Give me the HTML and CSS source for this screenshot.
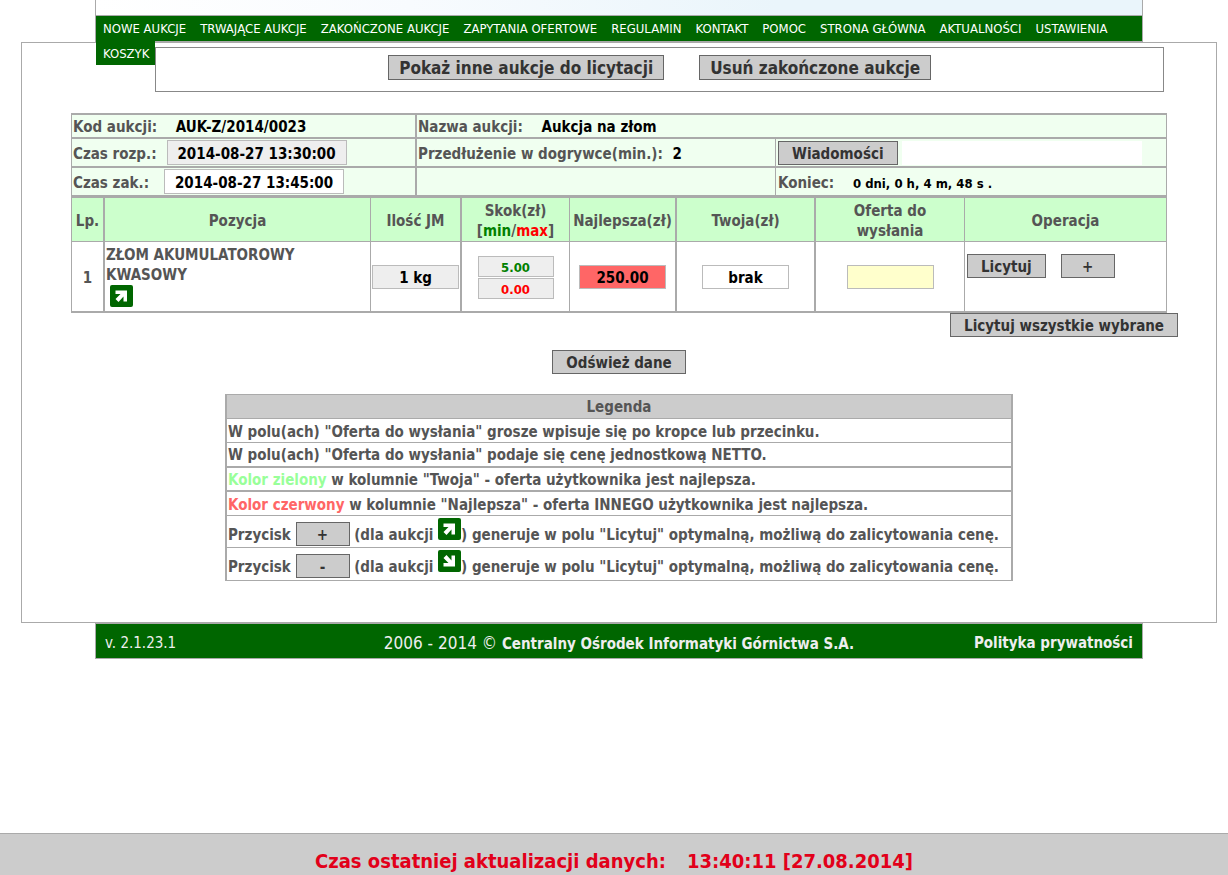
FILE: index.html
```
<!DOCTYPE html>
<html lang="pl">
<head>
<meta charset="utf-8">
<title>Aukcja AUK-Z/2014/0023</title>
<link rel="stylesheet" href="styles.css">
</head>
<body>
<svg class="defs" width="0" height="0" aria-hidden="true">
  <symbol id="arrow-up" viewBox="0 0 23 22">
    <rect width="23" height="22" rx="2" fill="#060"/>
    <path d="M5.500 5.500H17v11h-3.500V11.500L8.500 17 5.500 14 10.500 9H5.500z" fill="#fff"/>
  </symbol>
  <symbol id="arrow-down" viewBox="0 0 23 22">
    <rect width="23" height="22" rx="2" fill="#060"/>
    <path d="M5.500 16.500H17v-11h-3.500V10.500L8.500 5 5.500 8 10.500 13H5.500z" fill="#fff"/>
  </symbol>
</svg>

<header class="header">
  <div class="banner"></div>
  <nav class="nav">
    <a href="#">NOWE AUKCJE</a>
    <a href="#">TRWAJĄCE AUKCJE</a>
    <a href="#">ZAKOŃCZONE AUKCJE</a>
    <a href="#">ZAPYTANIA OFERTOWE</a>
    <a href="#">REGULAMIN</a>
    <a href="#">KONTAKT</a>
    <a href="#">POMOC</a>
    <a href="#">STRONA GŁÓWNA</a>
    <a href="#">AKTUALNOŚCI</a>
    <a href="#">USTAWIENIA</a>
  </nav>
</header>

<main class="main">
  <div class="top-row">
    <a class="cart" href="#">KOSZYK</a>
    <div class="toolbar">
      <button class="btn btn-big" type="button">Pokaż inne aukcje do licytacji</button>
      <button class="btn btn-big" type="button">Usuń zakończone aukcje</button>
    </div>
  </div>

  <table class="info">
    <colgroup><col class="c-code"><col class="c-name"><col></colgroup>
    <tr class="r-first">
      <td class="thick">Kod aukcji: <strong class="value">AUK-Z/2014/0023</strong></td>
      <td colspan="2">Nazwa aukcji: <strong class="value">Aukcja na złom</strong></td>
    </tr>
    <tr>
      <td class="thick flush"><div class="cell"><label for="start">Czas rozp.:</label><input id="start" class="field date" value="2014-08-27 13:30:00" readonly></div></td>
      <td>Przedłużenie w dogrywce(min.): <strong class="value near">2</strong></td>
      <td class="flush"><div class="cell cell-message"><button class="btn" type="button">Wiadomości</button><span class="message"></span></div></td>
    </tr>
    <tr class="r-last">
      <td class="thick flush"><div class="cell cell-end"><label for="end">Czas zak.:</label><input id="end" class="field date white" value="2014-08-27 13:45:00" readonly></div></td>
      <td></td>
      <td class="left-time">Koniec: <strong class="value countdown">0 dni, 0 h, 4 m, 48 s .</strong></td>
    </tr>
  </table>

  <table class="items">
    <colgroup><col class="c-lp"><col><col class="c-qty"><col class="c-step"><col class="c-best"><col class="c-own"><col class="c-offer"><col class="c-op"></colgroup>
    <thead>
      <tr>
        <th class="thick">Lp.</th>
        <th>Pozycja</th>
        <th class="thick">Ilość JM</th>
        <th>Skok(zł)<br>[<span class="min">min</span>/<span class="max">max</span>]</th>
        <th class="thick">Najlepsza(zł)</th>
        <th class="thick">Twoja(zł)</th>
        <th>Oferta do<br>wysłania</th>
        <th>Operacja</th>
      </tr>
    </thead>
    <tbody>
      <tr>
        <td class="thick center">1</td>
        <td class="top item-name">ZŁOM AKUMULATOROWY KWASOWY<br><svg class="icon item-icon" role="img" aria-label="Aukcja w górę"><use href="#arrow-up"/></svg></td>
        <td class="thick center flush"><input class="field amount" aria-label="Ilość" value="1 kg" readonly></td>
        <td class="center"><div class="steps"><input class="field step min" aria-label="Skok min" value="5.00" readonly><input class="field step max" aria-label="Skok max" value="0.00" readonly></div></td>
        <td class="thick center flush"><input class="field amount best" aria-label="Najlepsza" value="250.00" readonly></td>
        <td class="thick center flush"><input class="field amount white" aria-label="Twoja" value="brak" readonly></td>
        <td class="center flush"><input class="field amount offer" aria-label="Oferta do wysłania"></td>
        <td class="top flush"><div class="ops"><button class="btn" type="button">Licytuj</button><button class="btn btn-sign" type="button">+</button></div></td>
      </tr>
    </tbody>
  </table>

  <div class="bid-all"><button class="btn" type="button">Licytuj wszystkie wybrane</button></div>
  <div class="refresh"><button class="btn" type="button">Odśwież dane</button></div>

  <table class="legend">
    <thead><tr><th>Legenda</th></tr></thead>
    <tbody>
      <tr><td>W polu(ach) "Oferta do wysłania" grosze wpisuje się po kropce lub przecinku.</td></tr>
      <tr class="spaced"><td class="line">W polu(ach) "Oferta do wysłania" podaje się cenę jednostkową NETTO.</td></tr>
      <tr><td class="line"><span class="good">Kolor zielony</span> w kolumnie "Twoja" - oferta użytkownika jest najlepsza.</td></tr>
      <tr><td><span class="bad">Kolor czerwony</span> w kolumnie "Najlepsza" - oferta INNEGO użytkownika jest najlepsza.</td></tr>
      <tr class="tall"><td>Przycisk <button class="btn btn-sign" type="button">+</button> (dla aukcji <svg class="icon" role="img" aria-label="w górę"><use href="#arrow-up"/></svg>) generuje w polu "Licytuj" optymalną, możliwą do zalicytowania cenę.</td></tr>
      <tr class="tall"><td>Przycisk <button class="btn btn-sign" type="button">-</button> (dla aukcji <svg class="icon" role="img" aria-label="w dół"><use href="#arrow-down"/></svg>) generuje w polu "Licytuj" optymalną, możliwą do zalicytowania cenę.</td></tr>
    </tbody>
  </table>
</main>

<footer class="footer">
  <span>v. 2.1.23.1</span>
  <span class="copyright">2006 - 2014 © <b>Centralny Ośrodek Informatyki Górnictwa S.A.</b></span>
  <a href="#">Polityka prywatności</a>
</footer>

<div class="status"><span>Czas ostatniej aktualizacji danych:</span><span>13:40:11 [27.08.2014]</span></div>
</body>
</html>
```
FILE: styles.css
```
* { box-sizing: border-box; }

body {
  margin: 0 11px 0 21px;
  background: #fff;
  color: #555;
  font-family: "DejaVu Sans Condensed", Tahoma, "Noto Sans", sans-serif;
  font-size: 15px;
  line-height: 20px;
}

.defs { position: absolute; }

.header {
  margin: 0 74px;
  border: 1px solid #aaa;
  border-top: 0;
}

.banner {
  height: 16px;
  border-bottom: 1px solid #aaa;
  background: linear-gradient(to right, #fff, #f8fbfe 30%, #eaf5fb 65%, #eaf5fb);
}

.nav {
  display: flex;
  gap: 14px;
  height: 25px;
  padding-left: 7px;
  background: #060;
  font-size: 13px;
  line-height: 26px;
  white-space: nowrap;
}

.nav a, .cart { color: #fff; text-decoration: none; }

.main {
  padding-bottom: 41px;
  border: 1px solid #aaa;
}

.top-row {
  display: flex;
  align-items: flex-start;
  padding: 0 52px 0 74px;
}

.cart {
  height: 24px;
  margin-top: -2px;
  padding: 0 6px 0 7px;
  background: #060;
  font-size: 13px;
  line-height: 26px;
}

.toolbar {
  display: flex;
  flex: 1;
  justify-content: center;
  gap: 35px;
  height: 45px;
  margin-top: 4px;
  padding-top: 7px;
  border: 1px solid #888;
}

.btn {
  height: 24px;
  padding: 2px 12px 0;
  border: 1px solid #666;
  background: #ccc;
  color: #333;
  font: bold 15px/20px "DejaVu Sans Condensed", Tahoma, "Noto Sans", sans-serif;
  white-space: nowrap;
}

.btn-big { height: 25px; padding: 1px 10px 0; font-size: 17px; }

.btn-sign { width: 54px; }

.bid-all .btn, .refresh .btn, .cell .btn { padding: 2px 13px 0; }

table { border-spacing: 0; }

td, th {
  padding: 2px 1px 0;
  border-right: 1px solid #aaa;
  border-bottom: 1px solid #aaa;
  font-weight: bold;
  text-align: left;
}

.thick { border-right-width: 2px; }
.flush { padding-top: 0; }

.info, .items {
  width: calc(100% - 98px);
  margin: 0 49px;
  border-left: 1px solid #aaa;
  table-layout: fixed;
}

.info { margin-top: 21px; border-top: 2px solid #aaa; }
.info td { height: 29px; border-bottom-width: 2px; background: #f0fff0; }
.info .r-first td { height: 24px; }
.info .r-last td { height: 30px; border-bottom-width: 3px; }
.info .left-time { padding: 4px 2px 0; }
.c-code { width: 345px; }
.c-name { width: 359px; }

.value { margin-left: 14px; color: #000; }
.near { margin-left: 5px; }
.countdown { font-size: 13px; }

.cell { display: flex; align-items: center; gap: 10px; }
.cell label { padding-top: 2px; }
.cell-end { gap: 15px; }
.cell-message { gap: 4px; padding-left: 1px; }

.message { width: 240px; height: 24px; background: #fff; }

.field {
  height: 24px;
  padding: 2px 0 0;
  border: 1px solid #bbb;
  background: #eee;
  color: #000;
  font: bold 15px "DejaVu Sans Condensed", Tahoma, "Noto Sans", sans-serif;
  text-align: center;
}

.date { width: 180px; height: 25px; }
.amount { width: 87px; }
.step { width: 76px; height: 21px; font-size: 13px; }
.white { background: #fff; }
.best { background: #f66; }
.offer { background: #ffc; }
.min { color: #008000; }
.max { color: #f00; }

.items th { height: 44px; background: #cfc; text-align: center; }
.items tbody td { height: 71px; border-bottom-width: 2px; }
.items .center { text-align: center; }
.items .top { vertical-align: top; }
.items .item-name { padding-top: 3px; }
.c-lp { width: 33px; }
.c-qty { width: 91px; }
.c-step { width: 108px; }
.c-best { width: 107px; }
.c-own { width: 139px; }
.c-offer { width: 149px; }
.c-op { width: 202px; }

.steps { display: flex; flex-direction: column; align-items: center; gap: 1px; }
.ops { display: flex; gap: 15px; padding: 12px 0 0 1px; }
.ops .btn:first-child { padding: 2px 13px 0; }

.icon { width: 23px; height: 22px; }
.item-icon { margin-left: 4px; vertical-align: top; }

.bid-all { display: flex; justify-content: flex-end; margin-right: 38px; }

.refresh { display: flex; justify-content: center; margin: 13px 0 20px; }

.legend {
  width: 66%;
  margin: 0 auto;
  border-top: 1px solid #aaa;
  border-left: 2px solid #aaa;
  border-right: 1px solid #aaa;
}

.legend th { height: 24px; padding-top: 1px; background: #ccc; text-align: center; }
.legend td { height: 24px; }
.legend td.line { padding-top: 1px; border-bottom-width: 2px; }
.legend .spaced td { height: 25px; }
.legend .tall td { height: 32px; padding-top: 0; white-space: nowrap; }
.legend .tall:last-child td { height: 33px; }
.good { color: #9f9; }
.bad { color: #f66; }

.footer {
  display: grid;
  grid-template-columns: 1fr auto 1fr;
  align-items: center;
  height: 36px;
  margin: 0 74px;
  padding: 4px 9px 0;
  border: 1px solid #aaa;
  background: #060;
  color: #eee;
}

.footer a {
  color: #eee;
  font-weight: bold;
  text-align: right;
  text-decoration: none;
}

.copyright { font-size: 17px; }
.copyright b { font-size: 15px; }

.status {
  position: fixed;
  right: 0;
  bottom: 0;
  left: 0;
  display: flex;
  justify-content: center;
  gap: 21px;
  height: 42px;
  padding-top: 17px;
  border-top: 1px solid #aaa;
  background: #ccc;
  color: #e2001a;
  font-size: 20px;
  font-weight: bold;
}
```
